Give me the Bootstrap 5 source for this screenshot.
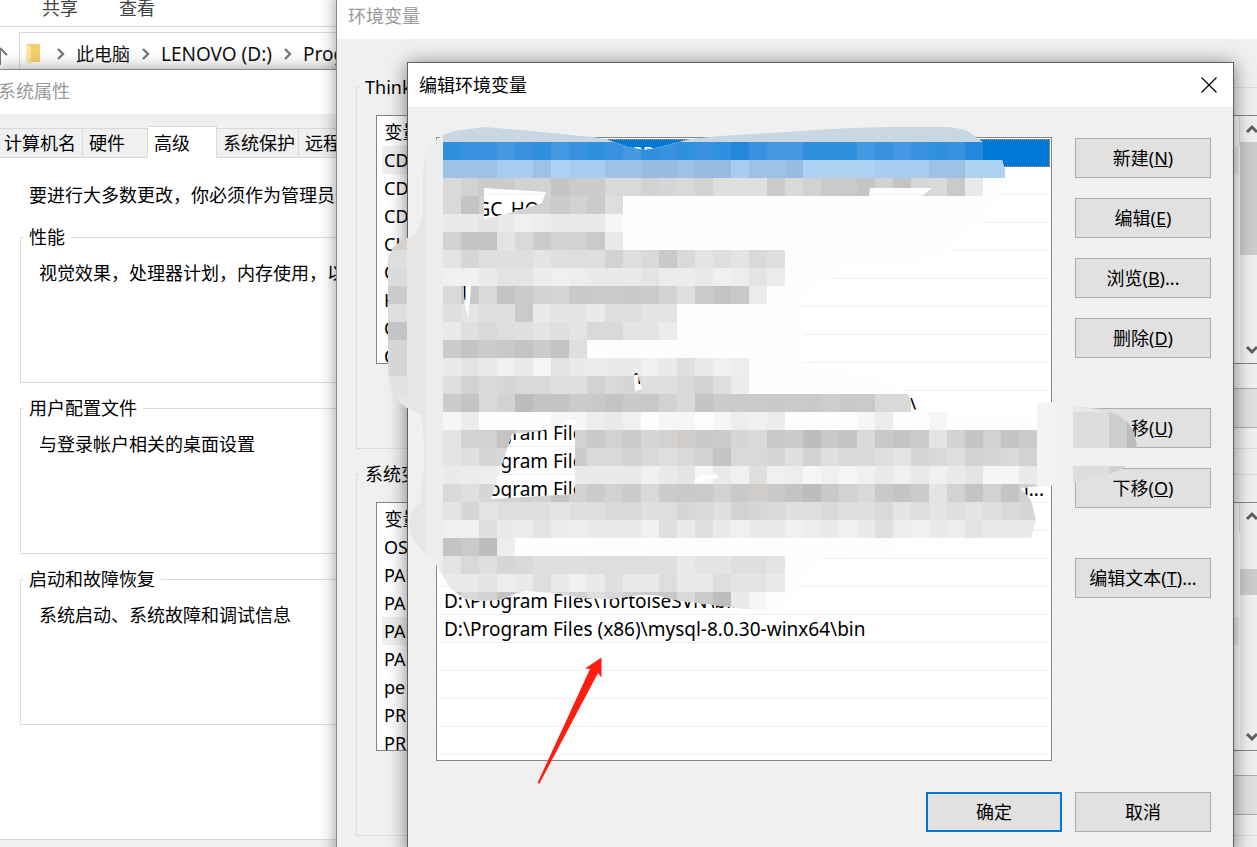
<!DOCTYPE html>
<html lang="zh-CN">
<head>
<meta charset="utf-8">
<meta name="viewport" content="width=device-width, initial-scale=1">
<title>编辑环境变量</title>
<link href="https://cdn.jsdelivr.net/npm/bootstrap@5.3.0/dist/css/bootstrap.min.css" rel="stylesheet">
<style>
  body { font-family: "Noto Sans", "Noto Sans CJK SC", sans-serif; font-size: 18px; line-height: 28px; color: #000; background: #fff; }
  .win { position: absolute; background: #f0f0f0; border: 1px solid #8a8a8a; box-shadow: 0 0 16px rgba(0,0,0,.4); }
  .win-explorer { inset: 0 0 auto 0; }
  .win-system { top: 69px; left: -3px; width: 420px; bottom: -40px; }
  .win-env { top: -6px; left: 336px; right: -48px; bottom: -40px; }
  .win-edit { top: 62px; left: 407px; right: 23px; bottom: -8px; border-color: #606060; box-shadow: 0 2px 18px rgba(0,0,0,.5); }
  .caption { background: #fff; height: 44px; line-height: 42px; }
  .caption-off { color: #999; }
  .inset-x { padding-left: 11px; }

  .ribbon { height: 27px; line-height: 16px; gap: 41px; padding-left: 42px; border-bottom: 1px solid #dadbdc; }
  .ribbon a { color: #444; text-decoration: none; }
  .address { height: 44px; margin: 5px 0 0 19px; padding-left: 6px; gap: 11px; border: 1px solid #d9d9d9; color: #111; }
  .latin { font-size: 19px; }
  .up-arrow { position: absolute; left: 0; top: 45px; }

  .tabs { background: #f0f0f0; height: 44px; padding-top: 12px; }
  .tabs .nav-link { height: 30px; margin: 2px 0 0; padding: 0 0 0 6px; line-height: 28px; color: #000; text-align: left; background: #f0f0f0; border: 1px solid #d9d9d9; border-left: 0; border-radius: 0; }
  .tabs .nav-link.active { height: 32px; margin: 0; background: #fff; border-bottom: 0; }
  .t1 { width: 85px; } .t2 { width: 65px; } .t3 { width: 69px; } .t4 { width: 82px; } .t5 { width: 82px; }
  .sheet { background: #fff; height: 682px; padding: 23px 0 0 22px; border-bottom: 1px solid #d9d9d9; }
  .note { margin: 0 0 28px 9px; }

  .group { border: 1px solid #dcdcdc; margin: 0; min-width: 0; position: relative; }
  .group > legend { position: absolute; left: 2px; top: -15px; width: auto; float: none; margin: 0; padding: 0 6px; font-size: 18px; line-height: 28px; background: inherit; white-space: nowrap; }
  .sheet .group { background: #fff; height: 146px; margin-bottom: 25px; padding: 21px 0 0 18px; }
  .win-env .group { background: #f0f0f0; height: 362px; margin: 0 19px 25px; padding: 27px 19px 0; }
  .varbox { height: 249px; background: #fff; border: 1px solid #828790; overflow: hidden; }
  .varbox table { margin: 0; width: 100%; }
  .varbox th, .varbox td { padding: 0 0 0 7px; height: 28px; line-height: 28px; font-weight: 400; }
  .varbox th { height: 30px; padding: 2px 0 0 5px; border-right: 1px solid #dcdcdc; }
  .varbox .picked { background: #f0f0f0; }
  .varbox tbody td { border-left: 5px solid #fff; padding-left: 2px; }
  .rail { width: 25px; background: #f0f0f0; }
  .rail .thumb { background: #cdcdcd; }
  .rail svg { flex: none; }

  .btn-win { --bs-btn-color: #000; --bs-btn-bg: #e1e1e1; --bs-btn-border-color: #adadad; --bs-btn-border-radius: 0; --bs-btn-padding-y: 0; --bs-btn-padding-x: 0; --bs-btn-font-size: 18px; --bs-btn-hover-color: #000; --bs-btn-hover-bg: #e5f1fb; --bs-btn-hover-border-color: #0078d7; height: 40px; width: 136px; }
  .btn-main { border: 2px solid #0078d7; }
  .btn-close-x { border: 0; background: none; padding: 0; width: 16px; height: 16px; display: flex; }

  .edit-body { padding: 30px 22px 31px 28px; gap: 23px; }
  .edit-actions { padding-top: 1px; gap: 20px; }
  .edit-actions .apart { margin-top: 30px; }
  .edit-foot { gap: 13px; padding-right: 22px; }
  .paths { background: #fff; border: 1px solid #828790; height: 624px; padding: 1px; overflow: hidden; }
  .paths li { height: 28px; line-height: 28px; padding: 0 6px; border-bottom: 1px solid #efefef; white-space: pre; display: flex; }
  .paths li.current { background: #0078d7; color: #fff; border: 1px dotted #f0903a; }
  .from-g { padding-left: 30px !important; } .from-slash { padding-left: 17px !important; }
  .from-n { padding-left: 192px !important; } .from-bs { padding-left: 472px !important; } .from-gra { padding-left: 190px !important; }
  .from-win { padding-left: 448px !important; }
  .cover { position: absolute; inset: 0; width: 100%; height: 100%; pointer-events: none; }
</style>
</head>
<body class="vh-100 overflow-hidden position-relative">

<section class="win-explorer position-absolute">
  <nav class="ribbon d-flex"><a href="#">共享</a><a href="#">查看</a></nav>
  <svg class="up-arrow" width="9" height="22" viewBox="0 0 9 22"><path d="M0 20V3M0 3l7 7" fill="none" stroke="#777" stroke-width="2"/></svg>
  <div class="address d-flex align-items-center">
    <svg width="15" height="22" viewBox="0 0 15 22"><path d="M1 1h13v18H1z" fill="#f5cf6c"/><path d="M0 1l5 3v17l-5-3z" fill="#ffe7a2"/></svg>
    <svg width="9" height="12" viewBox="0 0 9 12" class="ms-1"><path d="M2 1l5 5-5 5" fill="none" stroke="#777" stroke-width="2.4"/></svg>
    <span>此电脑</span>
    <svg width="9" height="12" viewBox="0 0 9 12"><path d="M2 1l5 5-5 5" fill="none" stroke="#777" stroke-width="2.4"/></svg>
    <span class="latin">LENOVO (D:)</span>
    <svg width="9" height="12" viewBox="0 0 9 12"><path d="M2 1l5 5-5 5" fill="none" stroke="#777" stroke-width="2.4"/></svg>
    <span class="latin">Program Files</span>
  </div>
</section>

<section class="win win-system">
  <div class="caption caption-off">系统属性</div>
  <div class="tabs nav d-flex flex-nowrap text-nowrap">
    <button class="nav-link t1">计算机名</button><button class="nav-link t2">硬件</button><button class="nav-link t3 active">高级</button><button class="nav-link t4">系统保护</button><button class="nav-link t5">远程</button>
  </div>
  <div class="sheet text-nowrap">
    <p class="note">要进行大多数更改，你必须作为管理员登录。</p>
    <fieldset class="group"><legend>性能</legend>视觉效果，处理器计划，内存使用，以及虚拟内存</fieldset>
    <fieldset class="group"><legend>用户配置文件</legend>与登录帐户相关的桌面设置</fieldset>
    <fieldset class="group"><legend>启动和故障恢复</legend>系统启动、系统故障和调试信息</fieldset>
  </div>
</section>

<section class="win win-env">
  <div class="caption caption-off inset-x mb-5">环境变量</div>
  <fieldset class="group">
    <legend>Think 的用户变量</legend>
    <div class="varbox d-flex">
      <table><thead><tr><th>变量</th></tr></thead><tbody>
        <tr><td class="picked">CD</td></tr><tr><td>CD</td></tr><tr><td>CD</td></tr><tr><td>CL</td></tr><tr><td>C</td></tr><tr><td>H</td></tr><tr><td>C</td></tr><tr><td>C</td></tr>
      </tbody></table>
      <div class="rail d-flex flex-column align-items-center">
        <svg class="my-2" width="14" height="10" viewBox="0 0 14 10"><path d="M2 8l5-5 5 5" fill="none" stroke="#606060" stroke-width="3"/></svg>
        <div class="thumb w-100" style="height:113px"></div>
        <svg class="mt-auto mb-2" width="14" height="10" viewBox="0 0 14 10"><path d="M2 2l5 5 5-5" fill="none" stroke="#606060" stroke-width="3"/></svg>
      </div>
    </div>
    <div class="d-flex justify-content-end mt-4"><button class="btn btn-win">删除</button></div>
  </fieldset>
  <fieldset class="group">
    <legend>系统变量(S)</legend>
    <div class="varbox d-flex">
      <table><thead><tr><th>变量</th></tr></thead><tbody>
        <tr><td>OS</td></tr><tr><td>PA</td></tr><tr><td>PA</td></tr><tr><td class="picked">PA</td></tr><tr><td>PA</td></tr><tr><td>pe</td></tr><tr><td>PR</td></tr><tr><td>PR</td></tr>
      </tbody></table>
      <div class="rail d-flex flex-column align-items-center">
        <svg class="mt-2" width="14" height="10" viewBox="0 0 14 10"><path d="M2 8l5-5 5 5" fill="none" stroke="#606060" stroke-width="3"/></svg>
        <div class="thumb w-100 mt-5" style="height:26px"></div>
        <svg class="mt-auto mb-2" width="14" height="10" viewBox="0 0 14 10"><path d="M2 2l5 5 5-5" fill="none" stroke="#606060" stroke-width="3"/></svg>
      </div>
    </div>
    <div class="d-flex justify-content-end mt-4"><button class="btn btn-win">删除</button></div>
  </fieldset>
</section>

<section class="win win-edit">
  <div class="caption inset-x d-flex align-items-center justify-content-between pe-3">
    <span>编辑环境变量</span>
    <button class="btn-close-x" aria-label="关闭"><svg width="16" height="16" viewBox="0 0 16 16"><path d="M.5.5l15 15M15.500.5l-15 15" stroke="#000" stroke-width="1.200"/></svg></button>
  </div>
  <div class="edit-body d-flex">
    <ul class="paths latin list-unstyled mb-0 flex-grow-1">
      <li class="current from-gra">GRA</li><li class="from-win">\Wind</li><li class="from-g">_GC_HO</li><li></li><li></li>
      <li class="from-slash">\l</li><li></li><li></li><li class="from-n">n</li><li class="from-bs">\</li>
      <li>D:\Program Files</li><li>D:\Program Files</li><li class="justify-content-between"><span>D:\Program Files</span><span>n...</span></li>
      <li></li><li></li><li></li><li>D:\Program Files\TortoiseSVN\bin</li>
      <li>D:\Program Files (x86)\mysql-8.0.30-winx64\bin</li>
      <li></li><li></li><li></li><li></li>
    </ul>
    <div class="edit-actions d-flex flex-column">
      <button class="btn btn-win">新建(<u>N</u>)</button>
      <button class="btn btn-win">编辑(<u>E</u>)</button>
      <button class="btn btn-win">浏览(<u>B</u>)...</button>
      <button class="btn btn-win">删除(<u>D</u>)</button>
      <button class="btn btn-win apart">上移(<u>U</u>)</button>
      <button class="btn btn-win">下移(<u>O</u>)</button>
      <button class="btn btn-win apart">编辑文本(<u>T</u>)...</button>
    </div>
  </div>
  <div class="edit-foot d-flex justify-content-end">
    <button class="btn btn-win btn-main">确定</button>
    <button class="btn btn-win">取消</button>
  </div>
</section>

<svg class="cover" aria-hidden="true">
  <defs><clipPath id="smear"><path clip-rule="evenodd" d="M443 135L454 131 485 127 520 130 592 137 606 139 628 147 645 150 660 147 690 139 720 136 800 131 850 128 890 127 950 127 966 130 983 142V160H1002L1005 170V178L1002 194 996 208 981 222 952 250 920 264 845 268 830 278 800 306 804 320 803 334 801 362 850 370 880 378 905 390 911 400V410L929 408V412H1037V403L1056 402V485L1020 488 1031 500 1036 520 1031 538 825 558 797 586 790 605 779 611 765 612 730 607 705 604 680 601 655 595 640 595 610 599 580 598 555 593 525 591 515 594 500 600 480 601 465 599 450 588 432 558 420 549Q409 536 409 522L412 512 421 501V490L424 470V440L421 415 407 408Q388 398 388 360V260Q390 246 407 238L415 236 423 214V180L424 160 430 145Z
    M484 188L546 192 542 203 510 213 484 219Z M463 286L471 285 470 300 468 318 465 306Z M634 375L636 368 642 389 635 392Z M870 188H932L922 196H869Z
    M512 434L540 431 562 424 570 418H575V494L491 499 500 470Z M693 483L700 475 717 473 718 478Z"/></clipPath></defs>
  <g clip-path="url(#smear)" id="mosaic" shape-rendering="crispEdges"></g>
  <path d="M1056 402h17v84h-17z" fill="#f0f0f0"/>
  <path d="M1073 406L1110 410Q1134 418 1137 448H1073z" fill="#dcdcdc"/><path d="M1073 406L1108 412H1073z" fill="#e8e8e8"/>
  <path d="M1109 412Q1134 420 1137 448H1109z" fill="#cdcdcd"/><path d="M1127 421Q1136 434 1137 448H1127z" fill="#bdbdbd"/>
  <path d="M1073 448h63v18h-63z" fill="#f0f0f0"/><path d="M1073 466h53q-9 7-25 9l-28 8z" fill="#dddddc"/><path d="M1109 466h17q-6 5-17 8z" fill="#d1d1cf"/>
  <path d="M602 657.500L575.500 668.500 581 668.500 570 695 537.500 783 539.500 783.500 588.500 673z" fill="none"/>
  <path d="M601.500 657.500L585 668.500 590 669 537.500 783 539.500 783.500 598 673 601.500 677.500z" fill="#ff1d10"/>
</svg>

<script src="https://cdn.jsdelivr.net/npm/bootstrap@5.3.0/dist/js/bootstrap.bundle.min.js"></script>
<script>
  const CELL = 18, X0 = 443, Y0 = 142;
  const tone = { a:'#c5c4c3', b:'#cccbca', c:'#d2d2d2', d:'#d9d9d8', e:'#dfdfde', f:'#e4e4e3', g:'#eaeaea', h:'#f0f0f0', i:'#f6f6f5', w:'#fefefe',
    j:'#c7c9cb', k:'#d4d6d8', l:'#dcdee0', m:'#d0ccc9', n:'#e6e4e2', o:'#ebeeed', p:'#ebecee', q:'#c8cbc9', z:'#bdbdbd',
    A:'#2388dc', B:'#2f90df', C:'#3992e0', D:'#4598e2', E:'#96bde0', F:'#9dc3e4', G:'#a7ceef', H:'#aed3f2' };
  const rows = [
    'BCCDCBDCBCDBCBCBACDDBBBDCDCBCA',
    'FFFGGFHGGFFEEFEEGFFEHHHHGGGFFHHH',
    'dcbbccabbddckdceeebdcbqacakdqg',
    'daccccbcbl',
    'ggnghogggi',
    'caafdbccqg',
    'nkeelfelecedjdnlfdl',
    'hhgfnphogggnppghonp',
    'djdabckjqbjbcebajp',
    'efleqgnfgeeff',
    'gedlefefddfnp',
    'babjabal',
    'gnghgingpgghgegho',
    'ecdkddeecdkeedcep',
    'badczaabjajjcdabqqjbjmjqdd',
    'ipwwwwiioghwiiwiohpwwwwipwwiwwwww',
    'fccacabcjcbkcmjbkdjbzjadjabfcacabki',
    'nekdcdcbddcdedcaddkeceddlfkdeckdcqi',
    'gpooppogggghgfighehoihihghghgfiigii',
    'dekcccacbcbdbjqcjmjazjcdjabfcacacci',
    'nkneeefelddelkdeckdeldeedfefenldkei',
    'hhegpnpoggghegeghgghoghgeohgofggghi',
    'aqzo',
    'fdekdeeellleegfneef',
    'ggfoglghgegglgglnfg',
    'adcacddcedcbjdqzgi'
  ];
  const svg = document.getElementById('mosaic');
  function cell(x, y, w, h, color) {
    const r = document.createElementNS('http://www.w3.org/2000/svg', 'rect');
    Object.entries({ x, y, width: w, height: h, fill: color }).forEach(([k, v]) => r.setAttribute(k, v));
    svg.appendChild(r);
  }
  cell(X0, Y0, 620, 470, '#fefefe');
  cell(X0, 120, 560, 22, '#c9d7e2');
  rows.forEach((row, j) => [...row].forEach((t, i) => cell(X0 + i * CELL, Y0 + j * CELL, CELL, CELL, tone[t])));
  cell(407, 120, 18, 500, '#e6e6e5');
  cell(425, 120, 18, 490, '#ebeeed');
  cell(1037, 400, 20, 90, '#f3f3f3');
  ['#d6d0cc', '#dedede', '#d9dcda', '#cccccc', '#dedede', '#c4c4c4', '#d6d6d4', '#d6d6d6', '#e2e2e2', '#e6e6e6']
    .forEach((c, j) => cell(387, 232 + j * CELL, 20, CELL, c));
</script>
</body>
</html>
